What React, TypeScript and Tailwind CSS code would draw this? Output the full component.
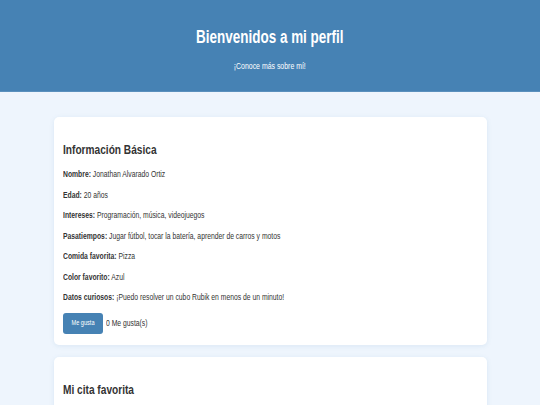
const datos: [string, string][] = [
  ["Nombre:", "Jonathan Alvarado Ortiz"],
  ["Edad:", "20 años"],
  ["Intereses:", "Programación, música, videojuegos"],
  ["Pasatiempos:", "Jugar fútbol, tocar la batería, aprender de carros y motos"],
  ["Comida favorita:", "Pizza"],
  ["Color favorito:", "Azul"],
  ["Datos curiosos:", "¡Puedo resolver un cubo Rubik en menos de un minuto!"],
];

export default function App() {
  return (
    <div className="font-['Liberation_Sans',Arial,sans-serif] h-[405px] overflow-hidden bg-[#eef5fd] text-[#333]">
      <header className="h-[92px] bg-[#4682b4] border-b border-[#5a90bd] flex flex-col items-center text-white">
        <h1 className="mt-[27px] text-[17.5px] leading-[20px] font-bold scale-x-[0.77]">Bienvenidos a mi perfil</h1>
        <p className="mt-[14px] text-[9px] leading-[11px] scale-x-[0.77]">¡Conoce más sobre mí!</p>
      </header>

      <main className="pt-[25px] flex flex-col items-center gap-[12px]">
        <section className="w-[433px] bg-white rounded-[5px] shadow-[0_1px_5px_rgba(70,130,180,0.12)] px-[9px] pt-[25px] pb-[11px]">
          <h2 className="text-[13px] leading-[15px] font-bold text-[#333] origin-left scale-x-[0.78]">Información Básica</h2>
          <div className="mt-[11px] flex flex-col gap-[8.5px] text-[8.6px] leading-[12px]">
            {datos.map(([k, v]) => (
              <p key={k} className="origin-left scale-x-[0.79] whitespace-nowrap">
                <span className="font-bold">{k}</span> {v}
              </p>
            ))}
          </div>
          <div className="mt-[10px] flex items-center gap-[3px]">
            <button className="w-[40px] h-[21px] rounded-[3px] bg-[#4682b4] text-white">
              <span className="block text-[7px] scale-x-[0.8]">Me gusta</span>
            </button>
            <span className="text-[8.6px] origin-left scale-x-[0.79]">0 Me gusta(s)</span>
          </div>
        </section>

        <section className="w-[433px] h-[120px] bg-white rounded-[5px] shadow-[0_1px_5px_rgba(70,130,180,0.12)] px-[9px] pt-[25px]">
          <h2 className="text-[13px] leading-[15px] font-bold text-[#333] origin-left scale-x-[0.78]">Mi cita favorita</h2>
        </section>
      </main>
    </div>
  );
}
